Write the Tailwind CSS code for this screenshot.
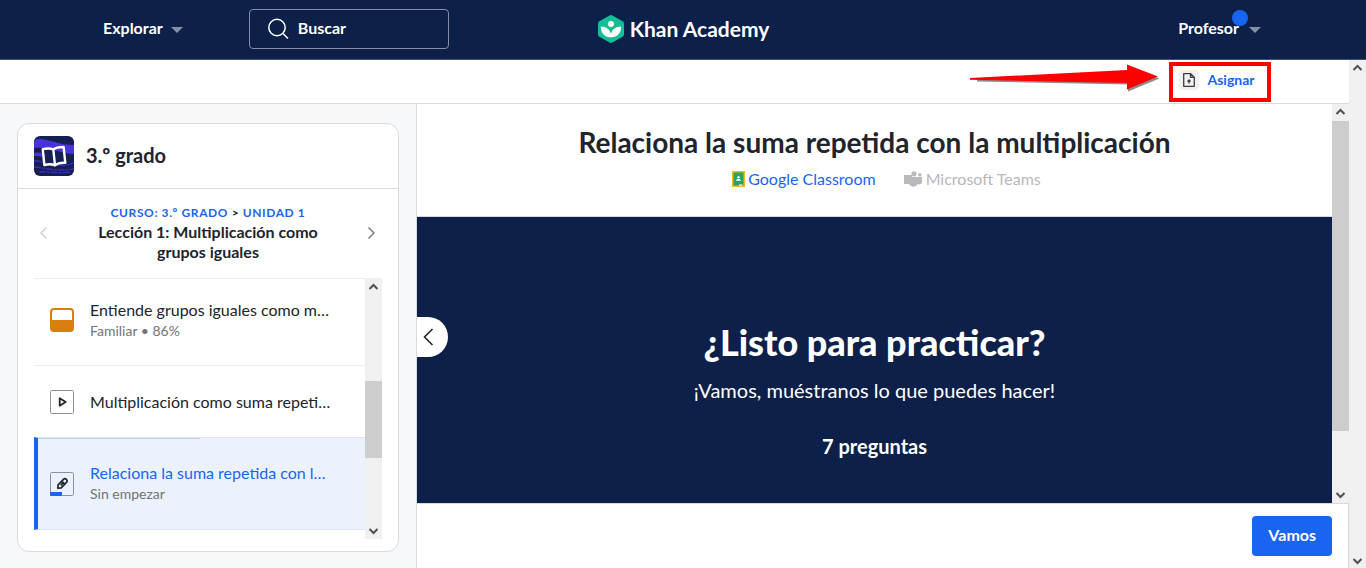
<!DOCTYPE html>
<html lang="es">
<head>
    <meta charset="UTF-8">
    <meta name="viewport" content="width=device-width, initial-scale=1.0">
    <title>Relaciona la suma repetida con la multiplicación | Khan Academy</title>
    <script src="https://cdn.jsdelivr.net/npm/@tailwindcss/browser@4"></script>
</head>
<body class="min-h-screen flex flex-col bg-white font-['Lato','Noto_Sans',sans-serif] text-base leading-5 text-[#21242c]">

    <!-- Top navigation -->
    <header class="h-[60px] shrink-0 grid grid-cols-[1fr_auto_1fr] items-center pb-0.5 bg-[#0c2049] border-b border-[#3d4d6d] text-white font-bold">
        <div class="flex items-center pl-[103px] gap-[66px]">
            <button type="button" class="flex items-center gap-2 pb-0.5 font-bold">
                Explorar
                <svg class="w-3 h-2 mt-1" viewBox="0 0 12 8"><path d="M0 1h12L6 7z" fill="#858fa4"/></svg>
            </button>
            <label class="flex items-center gap-2 w-[200px] h-10 px-4 border border-[#858fa4] rounded">
                <svg class="w-6 h-6 shrink-0" viewBox="0 0 24 24" fill="none" stroke="#fff" stroke-width="1.5"><circle cx="11" cy="10.500" r="8.200"/><path d="M17 16.500l5 5"/></svg>
                <input type="search" aria-label="Buscar" placeholder="Buscar" class="w-full pb-0.5 bg-transparent font-bold placeholder:text-white focus:outline-none">
            </label>
        </div>
        <a href="#" class="flex items-center gap-[5px] text-[21px] leading-7">
            <svg class="w-7 h-7" viewBox="0 0 28 28">
                <path d="M12.600 .4a3 3 0 0 1 2.800 0l10.200 5.800a3 3 0 0 1 1.400 2.500v10.600a3 3 0 0 1-1.400 2.500l-10.200 5.800a3 3 0 0 1-2.800 0L2.400 21.800A3 3 0 0 1 1 19.300V8.700a3 3 0 0 1 1.400-2.500z" fill="#14bf96"/>
                <circle cx="14" cy="9" r="3" fill="#fff"/>
                <path d="M3.800 11.500c5.700 0 9.200 3.200 10.200 7.500 1-4.300 4.500-7.500 10.200-7.500 0 6.500-4 10.700-9.500 10.700h-1.400c-5.500 0-9.500-4.200-9.500-10.700z" fill="#fff"/>
            </svg>
            Khan Academy
        </a>
        <div class="flex justify-end pr-[105px]">
            <button type="button" class="relative flex items-center gap-[10px] pb-0.5 font-bold">
                Profesor
                <span class="absolute right-[13px] -top-2 w-4 h-4 rounded-full bg-[#1865f2]"></span>
                <svg class="w-3 h-2 mt-1" viewBox="0 0 12 8"><path d="M0 1h12L6 7z" fill="#858fa4"/></svg>
            </button>
        </div>
    </header>

    <div class="flex-1 flex">
        <div class="flex-1 min-w-0 flex flex-col">

            <!-- Teacher toolbar -->
            <div class="h-11 shrink-0 flex justify-end items-center pr-[78px] border-b border-[#d9dadc]">
                <svg class="w-[190px] h-8 mr-[9px] mb-[3px]" viewBox="0 0 190 32">
                    <path d="M7 16L158 7.500V3L189.500 14.500 158 27.500V20.500L7 17.500z" fill="#8c8c8c"/>
                    <path d="M0 14L157 6V.5L188 12.500 157 25.500V19L0 15.800z" fill="#f00"/>
                </svg>
                <div class="w-[102px] h-10 flex items-center justify-center pr-1.5 pb-1 border-4 border-[#f00]">
                    <button type="button" class="flex items-center gap-2 text-sm font-bold text-[#1865f2]">
                        <span class="flex items-center justify-center w-5 h-5 rounded bg-[#f0f0f1]">
                            <svg class="w-4 h-4" viewBox="0 0 16 16" fill="none" stroke="#3b3e46" stroke-width="1.300" stroke-linejoin="round"><path d="M2.700 1.700h7L13.300 5.200v9.100H2.700zM9.500 1.900v3.500H13M8 11.500V8M6.500 9.500L8 8l1.500 1.500"/></svg>
                        </span>
                        Asignar
                    </button>
                </div>
            </div>

            <div class="flex-1 flex">
                <!-- Lesson sidebar -->
                <aside class="w-[417px] shrink-0 px-[17px] pt-[19px] pb-4 bg-[#f7f8fa] border-r border-[#d9dadc]">
                    <div class="bg-white border border-[#d9dadc] rounded-xl pb-3">
                        <div class="flex items-center gap-3 px-4 py-3 border-b border-[#d9dadc]">
                            <svg class="w-10 h-10" viewBox="0 0 40 40">
                                <defs><clipPath id="tile"><rect width="40" height="40" rx="6"/></clipPath></defs>
                                <g clip-path="url(#tile)">
                                    <rect width="40" height="40" fill="#141f52"/>
                                    <path d="M3 3c10-1 22 6 37 6v9C28 18 14 10 0 12V6zM0 17c6-1 9 0 12 2l-2 3C7 20 4 20 0 20z" fill="#4a32dc"/>
                                    <path d="M0 25c6-1 8 2 14 3M24 29c6 1 10 0 16-2M0 31c12 1 22 5 40 2M5 36c10-1 20 2 32 0" fill="none" stroke="#3b2cc0" stroke-width="1.500" stroke-dasharray="7 1 3 1"/>
                                    <path d="M20 13.500c-3-2-6-2-10.500-1.500v16c4-.7 7.500-.5 10.500 1.500 3-2 6.500-2.200 10.500-1.500V12c-4.500-.5-7.500-.5-10.500 1.500zv16" fill="none" stroke="#fff" stroke-width="2.400" stroke-linejoin="round" transform="rotate(-6 20 20)"/>
                                </g>
                            </svg>
                            <h2 class="text-xl leading-6 pb-0.5 font-bold">3.º grado</h2>
                        </div>
                        <div class="h-[89px] flex items-center justify-between px-4 pb-0.5">
                            <button type="button" aria-label="Lección anterior" class="p-1">
                                <svg class="w-3 h-4" viewBox="0 0 12 16" fill="none" stroke="#d3d3d5" stroke-width="1.500"><path d="M8.500 2.500L3 8l5.500 5.500"/></svg>
                            </button>
                            <div class="w-[260px] text-center font-bold">
                                <p class="text-xs leading-[18px] tracking-wider"><a href="#" class="text-[#1865f2]">CURSO: 3.º GRADO</a> &gt; <a href="#" class="text-[#1865f2]">UNIDAD 1</a></p>
                                <h3>Lección 1: Multiplicación como grupos iguales</h3>
                            </div>
                            <button type="button" aria-label="Lección siguiente" class="p-1">
                                <svg class="w-3 h-4" viewBox="0 0 12 16" fill="none" stroke="#7c7e83" stroke-width="1.500"><path d="M2.500 2.500L8 8l-5.500 5.500"/></svg>
                            </button>
                        </div>
                        <div class="flex mx-4">
                            <ul class="flex-1 min-w-0 pb-[9px]">
                                <li class="h-[87px] flex items-center gap-4 pl-4 pb-1 border-t border-[#edeeee]">
                                    <svg class="w-6 h-6 shrink-0" viewBox="0 0 24 24"><rect x="1" y="1" width="22" height="22" rx="3" fill="#fff" stroke="#d97d0d" stroke-width="2"/><path d="M1 12h22v8a3 3 0 0 1-3 3H4a3 3 0 0 1-3-3z" fill="#d97d0d"/></svg>
                                    <div>
                                        <a href="#">Entiende grupos iguales como m…</a>
                                        <p class="mt-px text-sm leading-5 text-[#717378]">Familiar • 86%</p>
                                    </div>
                                </li>
                                <li class="h-[72px] flex items-center gap-4 pl-4 border-t border-[#edeeee]">
                                    <svg class="w-6 h-6 shrink-0" viewBox="0 0 24 24"><rect x=".5" y=".5" width="23" height="23" rx="1" fill="#fff" stroke="#8e9095"/><path d="M9.700 8.300v7.400l6-3.700z" fill="none" stroke="#21242c" stroke-width="1.800" stroke-linejoin="round"/></svg>
                                    <a href="#">Multiplicación como suma repeti…</a>
                                </li>
                                <li class="relative h-[93px] flex items-center gap-4 pl-3 border-y border-y-[#dfe5f0] border-l-4 border-l-[#1865f2] bg-[#ebf2fe]">
                                    <span class="absolute left-0 top-0 w-[162px] h-px bg-[#bdd2fb]"></span>
                                    <svg class="w-6 h-6 shrink-0" viewBox="0 0 24 24"><rect x=".5" y=".5" width="23" height="23" rx="1" fill="none" stroke="#8e9095"/><path d="M0 20h12v4H1a1 1 0 0 1-1-1z" fill="#1865f2"/><path d="M7.800 16.200l.3-3.400 5.600-5.600c1.700-1.500 4.500 1.200 3 3L11.200 15.900zM11.700 9.200l3 3M10.700 13.300l2.600-2.600" fill="none" stroke="#21242c" stroke-width="1.700" stroke-linejoin="round"/></svg>
                                    <div>
                                        <a href="#" class="text-[#1865f2]">Relaciona la suma repetida con l…</a>
                                        <p class="mt-px text-sm leading-5 text-[#717378]">Sin empezar</p>
                                    </div>
                                </li>
                            </ul>
                            <div class="w-[17px] flex flex-col items-center bg-[#f0f0f0]">
                                <svg class="w-[17px] h-[17px]" viewBox="0 0 17 17" fill="none" stroke="#505050" stroke-width="2"><path d="M4.500 11l4-4 4 4"/></svg>
                                <div class="w-full h-[77px] mt-[86px] bg-[#cdcdcd]"></div>
                                <svg class="w-[17px] h-[17px] mt-auto" viewBox="0 0 17 17" fill="none" stroke="#505050" stroke-width="2"><path d="M4.500 7l4 4 4-4"/></svg>
                            </div>
                        </div>
                    </div>
                </aside>

                <!-- Exercise -->
                <main class="relative flex-1 min-w-0 flex flex-col">
                    <button type="button" aria-label="Ocultar barra lateral" class="absolute left-0 top-[213px] w-[31px] h-10 flex items-center pl-[5px] rounded-r-full bg-white">
                        <svg class="w-4 h-5" viewBox="0 0 16 20" fill="none" stroke="#21242c" stroke-width="1.600"><path d="M10.500 2l-8 8 8 8"/></svg>
                    </button>
                    <div class="flex-1 flex">
                        <div class="flex-1 flex flex-col text-center">
                            <div class="h-[113px] pt-[22px] border-b border-[#d9dadc]">
                                <h1 class="text-[28px] leading-8 font-bold">Relaciona la suma repetida con la multiplicación</h1>
                                <div class="flex justify-center gap-7 mt-[11px] pl-6">
                                    <a href="#" class="flex items-center gap-[3px] text-[#1865f2]">
                                        <svg class="w-[13px] h-4" viewBox="0 0 13 16"><path d="M0 0h13v16H0z" fill="#f5ba15"/><path d="M1.500 1.500h10v13h-10z" fill="#23a566"/><circle cx="6.500" cy="6.300" r="1.200" fill="#fff"/><path d="M4 9.800c0-2.500 5-2.500 5 0z" fill="#fff"/><path d="M7 13.500h3.500v1.200H7z" fill="#fff"/></svg>
                                        Google Classroom
                                    </a>
                                    <button type="button" disabled class="flex items-center gap-[3px] text-[#b8b9bb]">
                                        <svg class="w-[19px] h-4" viewBox="0 0 19 16" fill="#b8b9bb"><path d="M0 4h8v9H0z"/><circle cx="10" cy="2.800" r="2.600"/><circle cx="15.800" cy="3.700" r="1.800"/><path d="M7 6h7v5c0 6-8 6-9.500 1H7zM13.500 6H18v5c0 2-2 3-4.500 2z"/></svg>
                                        Microsoft Teams
                                    </button>
                                </div>
                            </div>
                            <div class="flex-1 flex flex-col items-center justify-center pt-[99px] pb-10 bg-[#0c2049] text-white">
                                <h2 class="text-4xl leading-10 font-black">¿Listo para practicar?</h2>
                                <p class="mt-4 text-xl leading-6">¡Vamos, muéstranos lo que puedes hacer!</p>
                                <p class="mt-8 text-xl leading-6 font-bold">7 preguntas</p>
                            </div>
                        </div>
                        <div class="w-[17px] flex flex-col bg-[#f0f0f0]">
                            <svg class="w-[17px] h-[17px]" viewBox="0 0 17 17" fill="none" stroke="#505050" stroke-width="2"><path d="M4.500 10l4-4 4 4"/></svg>
                            <div class="h-[310px] bg-[#cdcdcd]"></div>
                            <svg class="w-[17px] h-[17px] mt-auto" viewBox="0 0 17 17" fill="none" stroke="#505050" stroke-width="2"><path d="M4.500 7l4 4 4-4"/></svg>
                        </div>
                    </div>
                    <div class="flex justify-end py-3 pr-4 border-t border-r border-[#d9dadc]">
                        <button type="button" class="h-10 px-4 pb-0.5 rounded bg-[#1865f2] text-white font-bold">Vamos</button>
                    </div>
                </main>
            </div>
        </div>

        <!-- Page scrollbar -->
        <div class="w-[17px] flex flex-col justify-between bg-[#f0f0f0]">
            <svg class="w-[17px] h-[17px]" viewBox="0 0 17 17" fill="none" stroke="#505050" stroke-width="2"><path d="M4.500 10l4-4 4 4"/></svg>
            <svg class="w-[17px] h-[17px]" viewBox="0 0 17 17" fill="none" stroke="#505050" stroke-width="2"><path d="M4.500 8l4 4 4-4"/></svg>
        </div>
    </div>
</body>
</html>
